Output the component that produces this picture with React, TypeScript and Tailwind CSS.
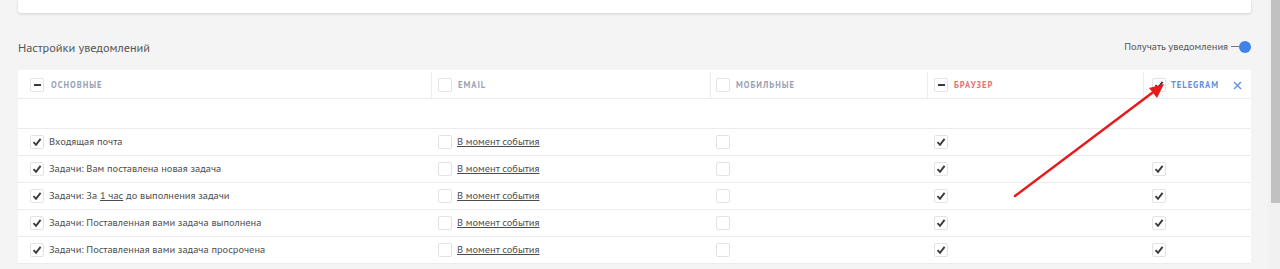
import React from "react";

const font = { fontFamily: '"Liberation Sans Narrow", "PT Sans", "Open Sans", sans-serif' };

const Box = ({ mark }: { mark?: "check" | "minus" | "none" }) => (
  <span className="inline-flex h-[14px] w-[14px] shrink-0 items-center justify-center rounded-[2px] border border-[#e3e3e3] bg-white">
    {mark === "check" && (
      <svg width="10" height="10" viewBox="0 0 10 10">
        <path d="M1.5 5.2 L4 7.8 L8.6 1.8" fill="none" stroke="#3a3a3a" strokeWidth="1.9" />
      </svg>
    )}
    {mark === "minus" && <span className="h-[2px] w-[7px] bg-[#3a3a3a]" />}
  </span>
);

const rows = [
  { label: <>Входящая почта</>, telegram: false },
  { label: <>Задачи: Вам поставлена новая задача</>, telegram: true },
  {
    label: (
      <>
        Задачи: За <span className="underline">1 час</span> до выполнения задачи
      </>
    ),
    telegram: true,
  },
  { label: <>Задачи: Поставленная вами задача выполнена</>, telegram: true },
  { label: <>Задачи: Поставленная вами задача просрочена</>, telegram: true },
];

const cols = "grid grid-cols-[413px_279px_217px_216px_1fr]";

export default function App() {
  return (
    <div className="relative flex h-[269px] w-full overflow-hidden bg-[#f4f4f4] text-[#4d4d4d]" style={font}>
      <div className="flex-1 pl-[18px] pr-[17px]">
        <div className="h-[13px] rounded-b-[3px] bg-white shadow-[0_1px_3px_rgba(0,0,0,0.15)]" />

        <div className="flex h-[57px] items-center justify-between">
          <h3 className="mt-[11px] text-[12.3px] text-[#555]">Настройки уведомлений</h3>
          <div className="mt-[11px] flex items-center text-[10.4px] text-[#555]">
            <span>Получать уведомления</span>
            <span className="ml-[3px] h-[1px] w-[8px] bg-[#777]" />
            <span className="h-[12px] w-[12px] rounded-full bg-[#3f82ee]" />
          </div>
        </div>

        <div className="bg-white text-[10.4px]">
          <div className={`${cols} h-[29px] border-b border-[#ececec] pt-[2px] text-[8.5px] font-bold tracking-[1px]`}>
            <div className="flex items-center gap-[7px] pl-3 text-[#98a2b3]">
              <Box mark="minus" />
              ОСНОВНЫЕ
            </div>
            <div className="flex items-center gap-[6px] border-l border-[#ececec] pl-[6px] text-[#98a2b3]">
              <Box />
              EMAIL
            </div>
            <div className="flex items-center gap-[6px] border-l border-[#ececec] pl-[5px] text-[#98a2b3]">
              <Box />
              МОБИЛЬНЫЕ
            </div>
            <div className="flex items-center gap-[6px] border-l border-[#ececec] pl-[6px] text-[#e57373]">
              <Box mark="minus" />
              БРАУЗЕР
            </div>
            <div className="flex items-center gap-[5px] border-l border-[#ececec] pl-[8px] pr-[9px] text-[#5b8fdd]">
              <Box mark="check" />
              TELEGRAM
              <svg className="ml-auto" width="9" height="9" viewBox="0 0 9 9">
                <path d="M1 1 L8 8 M8 1 L1 8" stroke="#5b8fdd" strokeWidth="1.3" />
              </svg>
            </div>
          </div>

          <div className="h-[30px] border-b border-[#ececec]" />

          {rows.map((r, i) => (
            <div key={i} className={`${cols} h-[27px] items-center border-b border-[#ececec]`}>
              <div className="flex items-center gap-[5px] pl-3">
                <Box mark="check" />
                <span>{r.label}</span>
              </div>
              <div className="flex items-center gap-[5px] pl-[7px]">
                <Box />
                <span className="underline">В момент события</span>
              </div>
              <div className="flex items-center pl-[6px]">
                <Box />
              </div>
              <div className="flex items-center pl-[7px]">
                <Box mark="check" />
              </div>
              <div className="flex items-center pl-[9px]">{r.telegram && <Box mark="check" />}</div>
            </div>
          ))}
        </div>
      </div>

      <div className="relative w-[12px] bg-[#f1f1f1]">
        <div className="ml-[3px] h-[203px] bg-[#c1c1c1]" />
      </div>

      <svg className="pointer-events-none absolute left-0 top-0" width="1280" height="269">
        <line x1="1015" y1="196" x2="1152" y2="93" stroke="#e8191a" strokeWidth="2.5" strokeLinecap="round" />
        <polygon points="1164,84 1149,88 1157,98" fill="#e8191a" />
      </svg>
    </div>
  );
}
